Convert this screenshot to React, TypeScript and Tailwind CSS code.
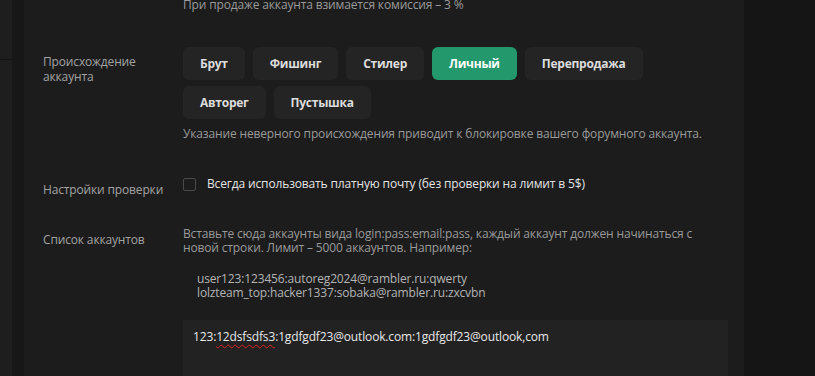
import React, { useState } from "react";

const ORIGINS = ["Брут", "Фишинг", "Стилер", "Личный", "Перепродажа", "Авторег", "Пустышка"];

const App: React.FC = () => {
  const [origin, setOrigin] = useState("Личный");
  const [paidMail, setPaidMail] = useState(false);

  const firstRow = ORIGINS.slice(0, 5);
  const secondRow = ORIGINS.slice(5);

  const renderButton = (name: string) => (
    <button
      key={name}
      onClick={() => setOrigin(name)}
      className={
        origin === name
          ? "h-[33px] px-[17px] rounded-[6px] bg-[#22986c] text-white text-[12px] font-bold tracking-[-0.25px]"
          : "h-[33px] px-[17px] rounded-[6px] bg-[#242424] text-[#dcdcdc] text-[12px] font-bold tracking-[-0.25px]"
      }
    >
      {name}
    </button>
  );

  return (
    <div
      className="flex w-[815px] h-[376px] overflow-hidden bg-[#151515] text-[12px] tracking-[-0.15px]"
      style={{ fontFamily: '"Open Sans", "Liberation Sans", sans-serif' }}
    >
      {/* левые полосы */}
      <div className="w-[12px] shrink-0 bg-[#1e1e1e] flex flex-col">
        <div className="h-[60px] border-b border-[#141414]" />
      </div>
      <div className="w-[12px] shrink-0 bg-[#171717]" />

      {/* основная панель */}
      <div className="w-[720px] shrink-0 bg-[#1c1c1c] pl-[19px] pr-[16px]">
        <div className="grid grid-cols-[140px_545px] mt-[-4px]">
          <div />
          <div className="leading-[18px] text-[#9a9a9a] whitespace-nowrap">
            При продаже аккаунта взимается комиссия – 3 %
          </div>
        </div>

        {/* Происхождение */}
        <div className="grid grid-cols-[140px_545px] mt-[33px]">
          <div className="pt-[7px] leading-[15px] text-[#a3a3a3]">
            <div>Происхождение</div>
            <div>аккаунта</div>
          </div>
          <div>
            <div className="flex flex-col gap-[6px]">
              <div className="flex gap-2">{firstRow.map(renderButton)}</div>
              <div className="flex gap-2">{secondRow.map(renderButton)}</div>
            </div>
            <div className="mt-[6px] leading-[18px] text-[#9a9a9a] whitespace-nowrap">
              Указание неверного происхождения приводит к блокировке вашего форумного аккаунта.
            </div>
          </div>
        </div>

        {/* Настройки проверки */}
        <div className="grid grid-cols-[140px_545px] mt-[32px]">
          <div className="pt-[6px] leading-[18px] text-[#a3a3a3] whitespace-nowrap">Настройки проверки</div>
          <label className="flex items-center h-[18px] cursor-pointer">
            <span
              onClick={() => setPaidMail(!paidMail)}
              className="w-[13px] h-[13px] rounded-[2px] border border-[#4a4a4a] bg-[#1c1c1c] shrink-0"
            />
            <span className="ml-[11px] text-[#e4e4e4] whitespace-nowrap">
              Всегда использовать платную почту (без проверки на лимит в 5$)
            </span>
          </label>
        </div>

        {/* Список аккаунтов */}
        <div className="grid grid-cols-[140px_545px] mt-[28px]">
          <div className="pt-[4px] leading-[18px] text-[#a3a3a3] whitespace-nowrap">Список аккаунтов</div>
          <div>
            <div className="leading-[13.5px] text-[#9a9a9a] whitespace-nowrap">
              <div>Вставьте сюда аккаунты вида login:pass:email:pass, каждый аккаунт должен начинаться с</div>
              <div>новой строки. Лимит – 5000 аккаунтов. Например:</div>
            </div>
            <div className="mt-[18px] ml-[14px] leading-[14px] text-[#b4b4b4] whitespace-nowrap">
              <div>user123:123456:autoreg2024@rambler.ru:qwerty</div>
              <div>lolzteam_top:hacker1337:sobaka@rambler.ru:zxcvbn</div>
            </div>
            <div className="mt-[20px] h-[100px] bg-[#222222] px-[10px] pt-[8px] leading-[18px] text-[#e8e8e8] whitespace-nowrap">
              123:
              <span className="underline decoration-wavy decoration-[#e02020] decoration-1 underline-offset-[3px]">
                12dsfsdfs3
              </span>
              :1gdfgdf23@outlook.com:1gdfgdf23@outlook,com
            </div>
          </div>
        </div>
      </div>

      {/* правая часть */}
      <div className="flex-1 bg-[#151515]" />
    </div>
  );
};

export default App;
